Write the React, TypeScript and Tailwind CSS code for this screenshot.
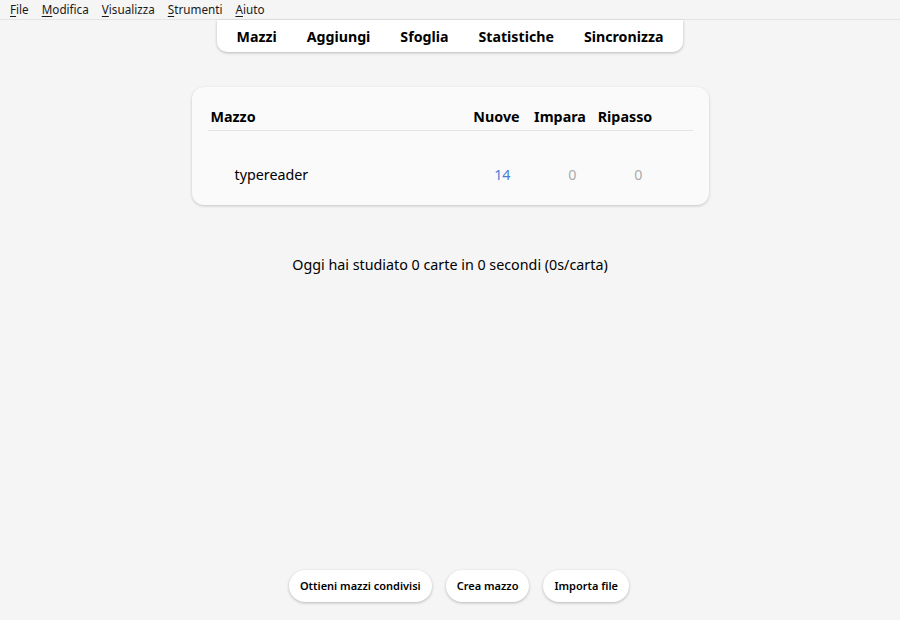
const menus = [
  { first: "F", rest: "ile" },
  { first: "M", rest: "odifica" },
  { first: "V", rest: "isualizza" },
  { first: "S", rest: "trumenti" },
  { first: "A", rest: "iuto" },
]

const tabs = ["Mazzi", "Aggiungi", "Sfoglia", "Statistiche", "Sincronizza"]

const decks = [{ name: "typereader", nuove: 14, impara: 0, ripasso: 0 }]

export default function App() {
  return (
    <div className="h-[620px] flex flex-col bg-[#f5f5f5] text-black font-['Noto_Sans','Open_Sans',sans-serif]">
      {/* Menu bar */}
      <div className="h-[20px] flex items-center gap-[13px] px-[10px] pt-[1px] border-b border-[#e4e4e4] text-[11.7px] leading-none text-[#1a1a1a]">
        {menus.map((m) => (
          <span key={m.first + m.rest}>
            <span className="underline underline-offset-2">{m.first}</span>
            {m.rest}
          </span>
        ))}
      </div>

      {/* Toolbar */}
      <div className="flex justify-center">
        <div className="flex items-center gap-[30px] h-[32px] px-[20px] pt-[2px] bg-white rounded-b-[10px] shadow-[0_1px_3px_rgba(0,0,0,0.25)] text-[14.2px] font-bold">
          {tabs.map((t) => (
            <span key={t}>{t}</span>
          ))}
        </div>
      </div>

      {/* Deck list */}
      <div className="mt-[35px] mx-auto w-[517px] bg-[#fafafa] rounded-[12px] shadow-[0_1px_3px_rgba(0,0,0,0.2)] px-[16px] pt-[18px] pb-[13px]">
        <div className="flex items-center h-[26px] border-b border-[#e3e3e3] text-[14.3px] font-bold pb-[2px]">
          <div className="flex-1 pl-[3px]">Mazzo</div>
          <div className="w-[62px] text-center">Nuove</div>
          <div className="w-[65px] text-center">Impara</div>
          <div className="w-[65px] text-center">Ripasso</div>
          <div className="w-[35px]" />
        </div>
        {decks.map((d) => (
          <div key={d.name} className="flex items-center h-[34px] mt-[27px] text-[14.3px]">
            <div className="flex-1 pl-[27px]">{d.name}</div>
            <div className="w-[62px] text-right pr-[17px] text-[#4a80d4]">{d.nuove}</div>
            <div className="w-[65px] text-right pr-[16px] text-[#aaaaaa]">{d.impara}</div>
            <div className="w-[65px] text-right pr-[15px] text-[#aaaaaa]">{d.ripasso}</div>
            <div className="w-[35px]" />
          </div>
        ))}
      </div>

      <p className="mt-[49px] text-center text-[14.3px]">Oggi hai studiato 0 carte in 0 secondi (0s/carta)</p>

      {/* Bottom buttons */}
      <div className="mt-auto mb-[18px] pl-[18px] flex justify-center gap-[14px]">
        {["Ottieni mazzi condivisi", "Crea mazzo", "Importa file"].map((b) => (
          <button
            key={b}
            className="h-[32px] px-[11px] rounded-full bg-white shadow-[0_1px_3px_rgba(0,0,0,0.25)] text-[11px] font-semibold">
            {b}
          </button>
        ))}
      </div>
    </div>
  )
}
